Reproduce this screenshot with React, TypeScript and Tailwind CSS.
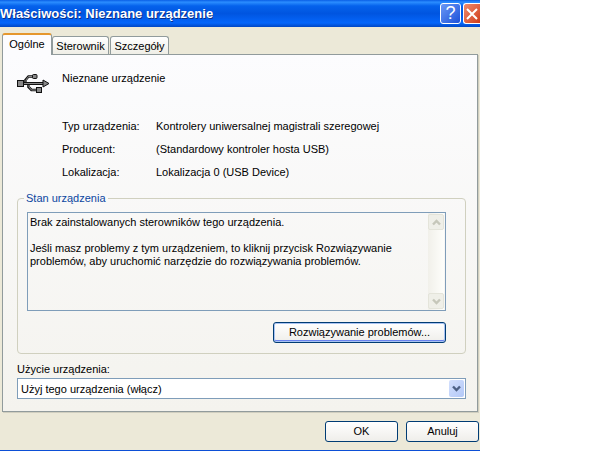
import { ReactNode, useState } from 'react';
import clsx from 'clsx';

const TABS = ['Ogólne', 'Sterownik', 'Szczegóły'];

const DETAILS = [
  { label: 'Typ urządzenia:', value: 'Kontrolery uniwersalnej magistrali szeregowej' },
  { label: 'Producent:', value: '(Standardowy kontroler hosta USB)' },
  { label: 'Lokalizacja:', value: 'Lokalizacja 0 (USB Device)' },
];

const STATUS = `Brak zainstalowanych sterowników tego urządzenia.

Jeśli masz problemy z tym urządzeniem, to kliknij przycisk Rozwiązywanie
problemów, aby uruchomić narzędzie do rozwiązywania problemów.`;

interface IChevron {
  up?: boolean;
  className?: string;
}

const Chevron = ({ up, className }: IChevron) => (
  <svg viewBox="0 0 9 7" className={clsx('h-[7px] w-[9px]', className)} fill="none" stroke="currentColor" strokeWidth="2.4">
    <path d={up ? 'M1 5.5 4.5 2 8 5.5' : 'M1 1.5 4.5 5 8 1.5'} />
  </svg>
);

const UsbIcon = () => (
  <svg viewBox="0 0 33 21" className="h-[21px] w-[33px] shrink-0" fill="none">
    <path d="M5 11.500H27" stroke="#111" strokeWidth="3" />
    <path d="M8.500 10.500V8L11.500 4.500H16M11.500 12V15L14.500 18H20" stroke="#111" strokeWidth="2.600" />
    <path d="M6 11.500H27" stroke="#888" strokeWidth="1" />
    <path d="M9 10V8L11.500 4.500H16M12 13V15L14.500 18H19" stroke="#aaa" strokeWidth=".8" />
    <path d="M26 8 32 11.500 26 15Z" fill="#888" stroke="#111" />
    <rect x=".5" y="8.500" width="6" height="6" fill="#888" stroke="#111" />
    <rect x="15.500" y="2.500" width="4.500" height="4" rx="1" fill="#888" stroke="#111" />
    <rect x="19.500" y="15.500" width="5" height="5" fill="#888" stroke="#111" />
  </svg>
);

interface IDialogButton {
  children: ReactNode;
  isDefault?: boolean;
  className?: string;
}

const DialogButton = ({ children, isDefault, className }: IDialogButton) => (
  <button
    type="button"
    className={clsx(
      'h-[21px] rounded-[3px] border border-[#003c74] bg-linear-to-b from-white to-[#efeeea] leading-[19px]',
      isDefault && 'shadow-[inset_0_0_0_1px_#a9c3f2,inset_0_-2px_0_#6982ee]',
      className
    )}
  >
    {children}
  </button>
);

const ScrollButton = ({ up }: { up?: boolean }) => (
  <button
    type="button"
    disabled
    aria-label={up ? 'Przewiń w górę' : 'Przewiń w dół'}
    className="flex h-4 w-4 items-center justify-center rounded-[2px] border border-[#e4e4da] bg-[#efefe8] text-[#c6c7ba]"
  >
    <Chevron up={up} />
  </button>
);

const TitleBar = () => (
  <header className="flex h-[27px] items-center justify-between overflow-hidden bg-[linear-gradient(to_bottom,#0a5fe6_0%,#2b8dff_8%,#0562ec_22%,#0055e0_50%,#0566fb_85%,#0147c4_100%)]">
    <h1 className="truncate text-[13px] leading-[18px] font-bold text-white [text-shadow:1px_1px_0_#0a2f86]">
      Właściwości: Nieznane urządzenie
    </h1>
    <div className="flex gap-[2px]">
      <button
        type="button"
        aria-label="Pomoc"
        className="flex h-[21px] w-[21px] items-center justify-center rounded-[3px] border border-white bg-linear-to-br from-[#6b98f5] to-[#1c4fd8] text-[18px] leading-[19px] text-white"
      >
        ?
      </button>
      <button
        type="button"
        aria-label="Zamknij"
        className="flex h-[21px] w-[17px] items-center justify-center rounded-l-[3px] border border-r-0 border-white bg-linear-to-br from-[#ee8a6c] to-[#cf3a14]"
      >
        <svg viewBox="0 0 12 12" className="h-3 w-3" stroke="#fff" strokeWidth="2">
          <path d="M1 1 11 11M11 1 1 11" />
        </svg>
      </button>
    </div>
  </header>
);

const App = () => {
  const [activeTab, setActiveTab] = useState(TABS[0]);

  return (
    <div className="min-h-screen bg-white font-['Liberation_Sans',Arial,sans-serif] text-[11px] leading-[14px] text-black">
      <div className="w-4/5 border-b border-[#0c4fd6] bg-[#ece9d8]">
        <TitleBar />

        <main className="px-[2px] pt-[6px]">
          <div role="tablist" className="flex items-end">
            {TABS.map((tab) => (
              <button
                key={tab}
                type="button"
                role="tab"
                aria-selected={tab === activeTab}
                onClick={() => setActiveTab(tab)}
                className={clsx(
                  'rounded-t-[3px] border border-b-0 border-[#919b9c]',
                  tab === activeTab
                    ? '-mb-px h-[22px] w-[50px] border-t-2 border-t-[#e5972d] bg-[#fcfcfe] pb-[2px]'
                    : 'mr-px h-[18px] w-[57px] bg-linear-to-b from-white to-[#efeee6] last:w-[59px]'
                )}
              >
                {tab}
              </button>
            ))}
          </div>

          <div
            role="tabpanel"
            className="border border-[#919b9c] bg-linear-to-b from-[#fcfcfe] to-[#f4f3ee] pt-4 pr-[11px] pb-3 pl-[14px] shadow-[1px_1px_0_#d0cebf]"
          >
            <div className="flex h-[22px]">
              <div className="w-[45px] self-end">
                <UsbIcon />
              </div>
              <p>Nieznane urządzenie</p>
            </div>

            <dl className="mt-[22px] grid grid-cols-[94px_1fr] pl-[45px] leading-[23px]">
              {DETAILS.map(({ label, value }) => (
                <div key={label} className="contents">
                  <dt>{label}</dt>
                  <dd>{value}</dd>
                </div>
              ))}
            </dl>

            <fieldset className="mt-[6px] rounded-[4px] border border-[#d0d0bf] pt-[6px] pr-[19px] pb-[10px] pl-[9px]">
              <legend className="-ml-[3px] px-[2px] leading-4 text-[#0b46a0]">Stan urządzenia</legend>
              <div className="flex h-[99px] border border-[#7f9db9] pr-px">
                <textarea
                  readOnly
                  aria-label="Stan urządzenia"
                  value={STATUS}
                  className="min-w-0 flex-1 resize-none overflow-hidden bg-transparent px-[2px] py-[3px] leading-[13px] outline-none"
                />
                <div className="flex flex-col justify-between bg-linear-to-r from-[#f1f0ea] to-[#fefefb] py-px">
                  <ScrollButton up />
                  <ScrollButton />
                </div>
              </div>
              <div className="mt-[11px] flex justify-end">
                <DialogButton isDefault className="w-[173px]">
                  Rozwiązywanie problemów...
                </DialogButton>
              </div>
            </fieldset>

            <label htmlFor="usage" className="mt-2 block">
              Użycie urządzenia:
            </label>
            <div className="mt-[2px] flex h-[21px] border border-[#7f9db9] bg-white">
              <div className="relative flex-1">
                <select id="usage" className="h-[19px] w-full appearance-none bg-transparent px-[3px] outline-none">
                  <option>Użyj tego urządzenia (włącz)</option>
                </select>
                <span className="pointer-events-none absolute top-px right-px flex h-[17px] w-[15px] items-center justify-center rounded-[2px] bg-linear-to-br from-[#d3e0fd] to-[#b3c8f7] text-[#4d6185]">
                  <Chevron />
                </span>
              </div>
            </div>
          </div>
        </main>

        <footer className="flex justify-end gap-2 pt-[9px] pr-px pb-2">
          <DialogButton className="w-[73px]">OK</DialogButton>
          <DialogButton className="w-[73px]">Anuluj</DialogButton>
        </footer>
      </div>
    </div>
  );
};

export default App;
